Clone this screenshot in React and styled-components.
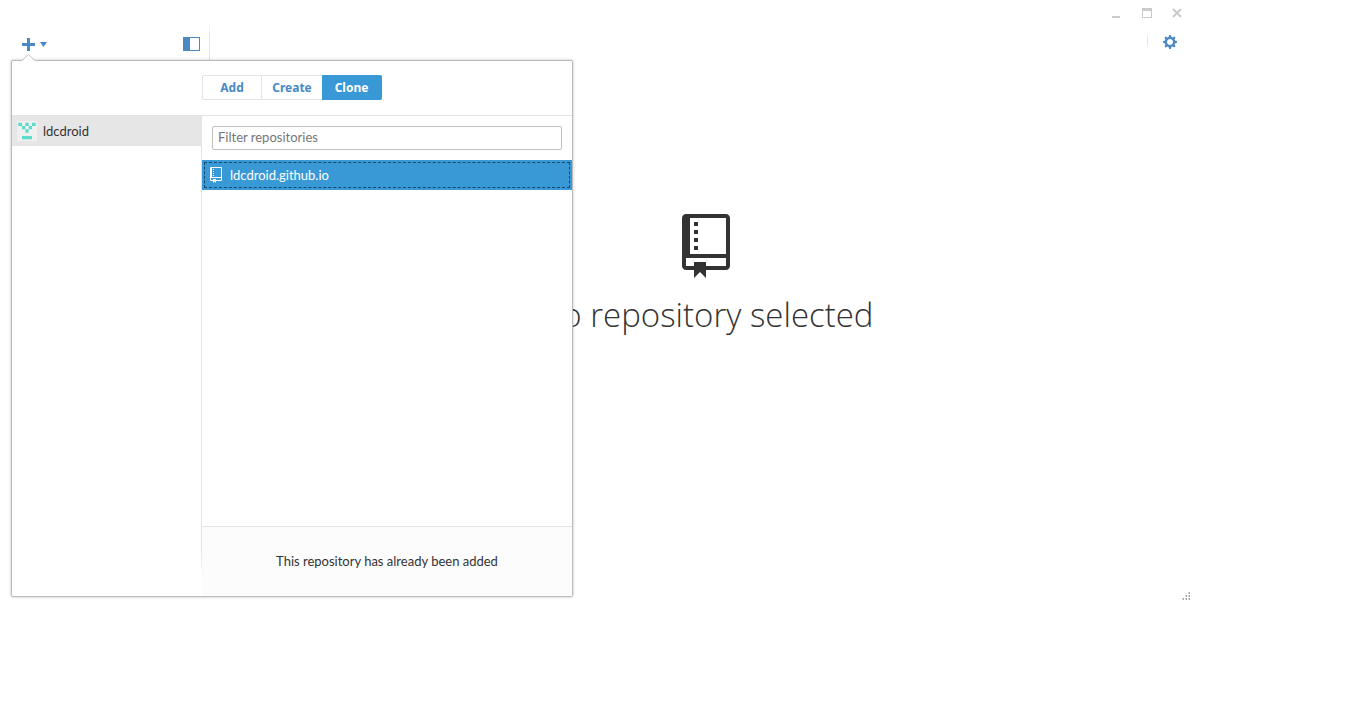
import React from "react";
import styled, { createGlobalStyle } from "styled-components";

const uiFont = `Lato, "Open Sans", sans-serif`;
const blue = "#4a89c5";
const activeBlue = "#3998d6";
const line = "#e3e3e3";

const GlobalStyle = createGlobalStyle`
  *, *::before, *::after { box-sizing: border-box; }
  body { margin: 0; background: #fff; color: #333; font: 13px/20px ${uiFont}; }
  button { padding: 0; border: 0; background: none; font: inherit; color: inherit; cursor: pointer; }
  svg { display: block; }
`;

const Page = styled.div`
  padding-right: 174px;
`;

const AppWindow = styled.div`
  position: relative;
  display: flex;
  flex-direction: column;
  min-height: 602px;
`;

const TitleBar = styled.div`
  display: flex;
  justify-content: flex-end;
  gap: 20px;
  height: 24px;
  padding: 8px 10px 0 0;
`;

const WindowButton = styled.button`
  width: 10px;
  height: 10px;
  color: #cbcbcb;
`;

const Toolbar = styled.header`
  display: flex;
  justify-content: space-between;
  height: 36px;
`;

const SidebarTools = styled.div`
  display: flex;
  align-items: center;
  justify-content: space-between;
  width: 210px;
  padding: 4px 9px 0 22px;
  border-right: 1px solid;
  border-image: linear-gradient(#fff, ${line} 12px) 1;
`;

const ToolButton = styled.button`
  display: flex;
  align-items: center;
  gap: 5px;
  color: ${blue};
`;

const SettingsTools = styled.div`
  display: flex;
  align-items: flex-start;
  gap: 15px;
  padding: 8px 15px 0 0;
`;

const Divider = styled.span`
  width: 1px;
  height: 18px;
  background: linear-gradient(#fff, #ddd, #fff);
`;

const SettingsButton = styled(ToolButton)`
  padding-top: 2px;
`;

const EmptyState = styled.main`
  display: flex;
  flex: 1;
  flex-direction: column;
  align-items: center;
  gap: 12px;
  margin-left: 220px;
  padding-top: 154px;
`;

const EmptyTitle = styled.h1`
  margin: 0;
  font: 300 33px/50px "Open Sans", "Noto Sans", sans-serif;
  white-space: nowrap;
`;

const ResizeGrip = styled.div`
  position: absolute;
  right: 1px;
  bottom: 1px;
`;

const Popover = styled.section`
  position: absolute;
  top: 60px;
  left: 11px;
  display: flex;
  flex-direction: column;
  width: 562px;
  height: 537px;
  border: 1px solid #bbb;
  border-radius: 2px;
  background: #fff;
  box-shadow: 0 0 3px rgba(0, 0, 0, 0.25);
`;

const PopoverArrow = styled.svg`
  position: absolute;
  top: -7px;
  left: 9px;
`;

const PopoverHeader = styled.div`
  display: flex;
  align-items: flex-start;
  height: 55px;
  padding: 14px 0 0 190px;
  border-bottom: 1px solid ${line};
`;

const Tab = styled.button`
  width: 60px;
  height: 25px;
  border: 1px solid ${(p) => (p.$active ? activeBlue : line)};
  border-left-width: ${(p) => (p.$first ? "1px" : "0")};
  border-right-width: ${(p) => (p.$active || p.$first ? "1px" : "0")};
  border-radius: ${(p) => (p.$first ? "2px 0 0 2px" : p.$active ? "0 2px 2px 0" : "0")};
  background: ${(p) => (p.$active ? activeBlue : "#fff")};
  color: ${(p) => (p.$active ? "#fff" : blue)};
  font: 700 12px/20px "Noto Sans", "Open Sans", sans-serif;
`;

const PopoverBody = styled.div`
  display: flex;
  flex: 1;
`;

const AccountList = styled.nav`
  width: 190px;
  border-right: 1px solid;
  border-image: linear-gradient(${line} 90%, #fff 96%) 1;
`;

const Account = styled.button`
  display: flex;
  align-items: center;
  gap: 6px;
  width: 100%;
  height: 30px;
  padding-left: 5px;
  background: #e6e6e6;
`;

const Repositories = styled.div`
  display: flex;
  flex: 1;
  flex-direction: column;
`;

const FilterInput = styled.input`
  height: 24px;
  margin: 10px;
  padding: 0 5px 3px;
  border: 1px solid #c0c0c0;
  border-radius: 2px;
  outline: 0;
  font: 13px/18px ${uiFont};
  &::placeholder { color: #767676; opacity: 1; }
`;

const Repository = styled.button`
  display: flex;
  align-items: center;
  gap: 8px;
  height: 30px;
  padding: 0 8px;
  background: ${activeBlue};
  color: #fff;
  outline: 1px dashed #174868;
  outline-offset: -3px;
`;

const Notice = styled.footer`
  display: flex;
  align-items: center;
  justify-content: center;
  height: 70px;
  margin-top: auto;
  padding-bottom: 2px;
  border-top: 1px solid ${line};
  background: #fcfcfc;
`;

function RepoIcon({ width, height }) {
  return (
    <svg width={width} height={height} viewBox="0 0 12 16" fill="currentColor" aria-hidden="true">
      <path
        fillRule="evenodd"
        d="M4 9H3V8h1v1zm0-3H3v1h1V6zm0-2H3v1h1V4zm0-2H3v1h1V2zm8-1v12c0 .55-.45 1-1 1H6v2l-1.5-1.5L3 16v-2H1c-.55 0-1-.45-1-1V1c0-.55.45-1 1-1h10c.55 0 1 .45 1 1zm-1 10H1v2h2v-1h3v1h5v-2zm0-10H2v9h9V1z"
      />
    </svg>
  );
}

function Identicon() {
  return (
    <svg width="20" height="20" viewBox="0 0 60 60" aria-hidden="true">
      <path fill="#f0f0f0" d="M0 0h60v60H0z" />
      <path
        fill="#5bdccb"
        d="M4 5h11v10H4zM25 5h10v10H25zM45 5h11v10H45zM15 15h10v10H15zM35 15h10v10H35zM25 25h10v10H25zM15 45h30v10H15z"
      />
    </svg>
  );
}

function GripIcon() {
  const dots = [[6, 0], [3, 3], [6, 3], [0, 6], [3, 6], [6, 6]];
  return (
    <svg width="9" height="9" viewBox="0 0 9 9" shapeRendering="crispEdges" aria-hidden="true">
      {dots.map(([x, y]) => (
        <g key={`${x}-${y}`}>
          <rect x={x} y={y} width="2" height="2" fill="#d4d4d4" />
          <rect x={x + 1} y={y} width="1" height="2" fill="#a8a8a8" />
        </g>
      ))}
    </svg>
  );
}

export default function App() {
  return (
    <Page>
      <GlobalStyle />
      <AppWindow>
        <TitleBar>
          <WindowButton aria-label="Minimize">
            <svg width="10" height="10" fill="currentColor"><path d="M0 8h8v2H0z" /></svg>
          </WindowButton>
          <WindowButton aria-label="Maximize">
            <svg width="10" height="10" fill="currentColor"><path fillRule="evenodd" d="M0 0h10v10H0zM1 3v6h8V3z" /></svg>
          </WindowButton>
          <WindowButton aria-label="Close">
            <svg width="10" height="10" stroke="currentColor" strokeWidth="2"><path d="M1 1l8 8M9 1l-8 8" /></svg>
          </WindowButton>
        </TitleBar>
        <Toolbar>
          <SidebarTools>
            <ToolButton aria-label="Add a repository">
              <svg width="13" height="13" fill="currentColor"><path d="M5 0h3v5h5v3H8v5H5V8H0V5h5z" /></svg>
              <svg width="7" height="5" fill="currentColor"><path d="M0 0h7L3.5 5z" /></svg>
            </ToolButton>
            <ToolButton aria-label="Toggle sidebar">
              <svg width="17" height="14" fill="currentColor"><path fillRule="evenodd" d="M0 0h17v14H0zM7 1v12h9V1z" /></svg>
            </ToolButton>
          </SidebarTools>
          <SettingsTools>
            <Divider />
            <SettingsButton aria-label="Settings">
              <svg width="14" height="16" viewBox="0 0 14 16" fill="currentColor">
                <path
                  fillRule="evenodd"
                  d="M14 8.77v-1.6l-1.94-.64-.45-1.09.88-1.84-1.13-1.13-1.81.91-1.09-.45-.69-1.92h-1.6l-.63 1.94-1.11.45-1.84-.88-1.13 1.13.91 1.81-.45 1.09L0 7.23v1.59l1.94.64.45 1.09-.88 1.84 1.13 1.13 1.81-.91 1.09.45.69 1.92h1.59l.63-1.94 1.11-.45 1.84.88 1.13-1.13-.92-1.81.47-1.09L14 8.75v.02zM7 11c-1.66 0-3-1.34-3-3s1.34-3 3-3 3 1.34 3 3-1.34 3-3 3z"
                />
              </svg>
            </SettingsButton>
          </SettingsTools>
        </Toolbar>
        <EmptyState>
          <RepoIcon width={48} height={64} />
          <EmptyTitle>No repository selected</EmptyTitle>
        </EmptyState>
        <ResizeGrip><GripIcon /></ResizeGrip>
        <Popover>
          <PopoverArrow width="15" height="8" aria-hidden="true">
            <path d="M0 7.5L7.5.5 15 7.5V8H0z" fill="#fff" />
            <path d="M0 6.5h1L7.5.5 14 6.5h1" fill="none" stroke="#c4c4c4" />
          </PopoverArrow>
          <PopoverHeader>
            <Tab $first>Add</Tab>
            <Tab>Create</Tab>
            <Tab $active>Clone</Tab>
          </PopoverHeader>
          <PopoverBody>
            <AccountList>
              <Account><Identicon />ldcdroid</Account>
            </AccountList>
            <Repositories>
              <FilterInput type="text" placeholder="Filter repositories" aria-label="Filter repositories" />
              <Repository><RepoIcon width={12} height={16} />ldcdroid.github.io</Repository>
              <Notice>This repository has already been added</Notice>
            </Repositories>
          </PopoverBody>
        </Popover>
      </AppWindow>
    </Page>
  );
}
